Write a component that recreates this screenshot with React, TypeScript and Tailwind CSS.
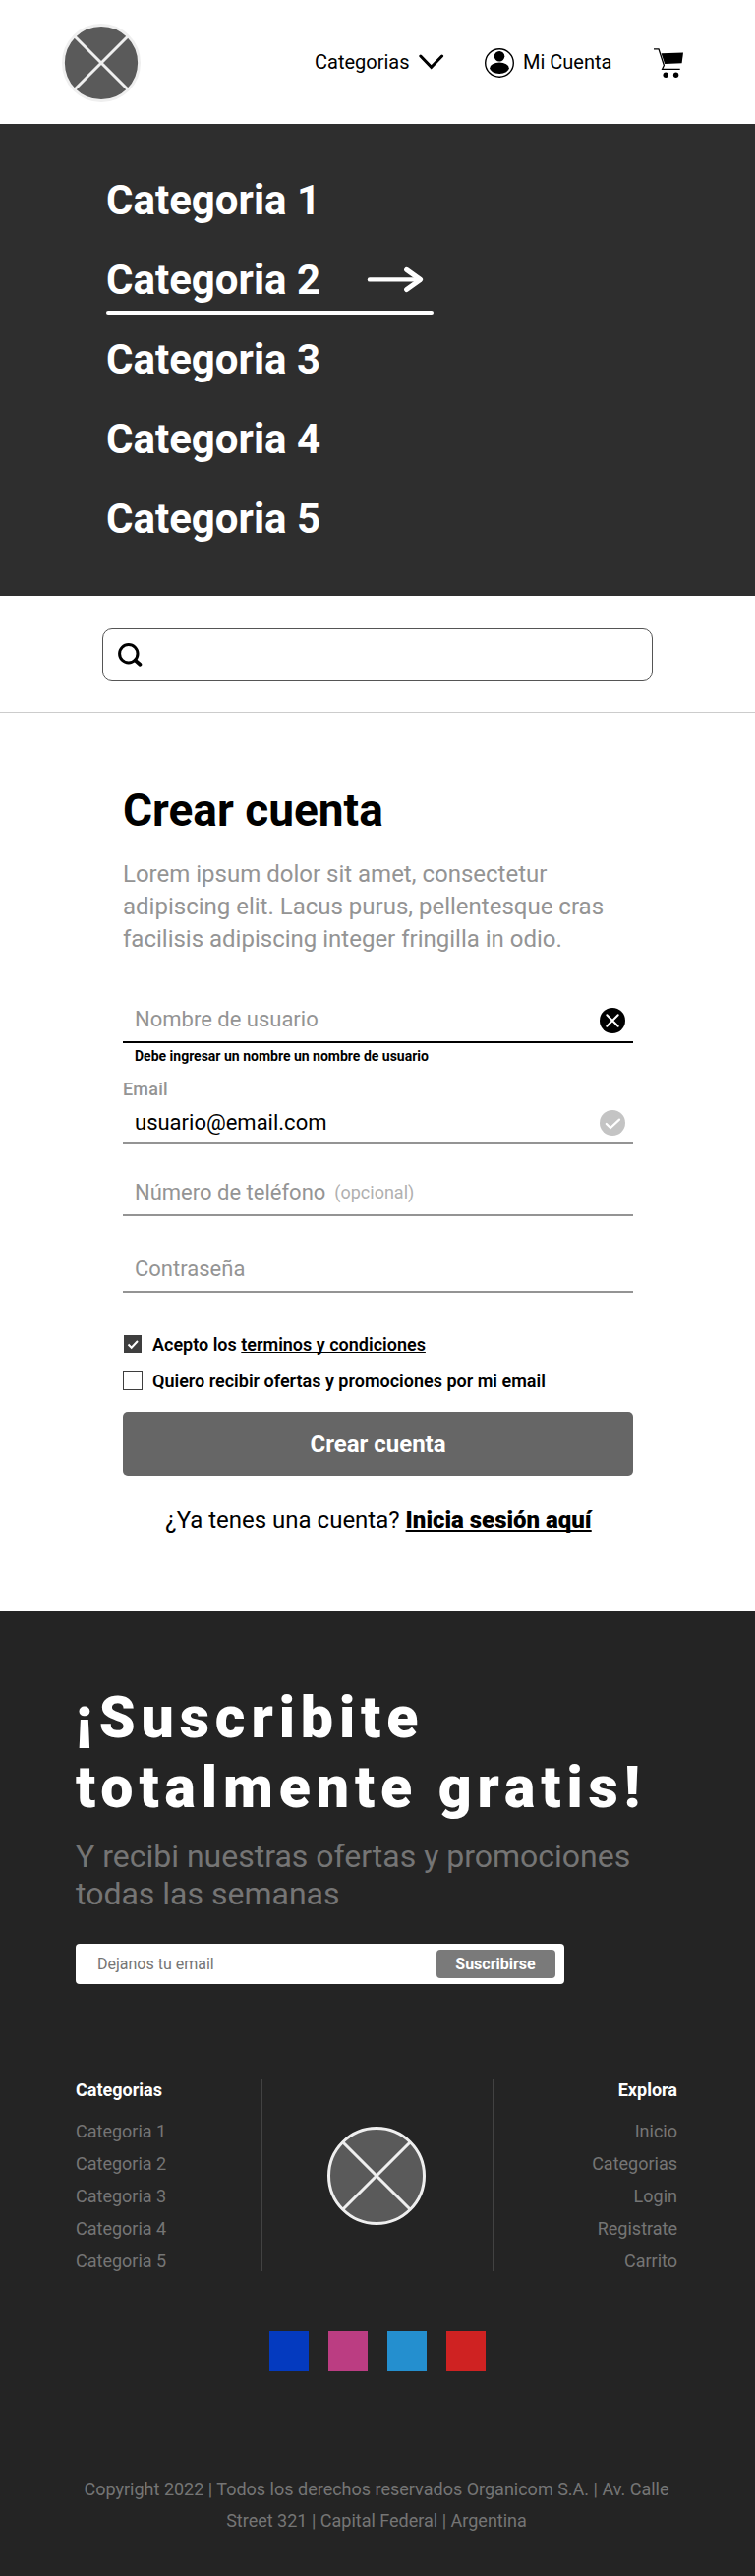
import React from "react";

function Logo({ size, ring }: { size: number; ring: number }) {
  const r = 50 - ring / 2;
  const d = r * 0.7071;
  return (
    <svg width={size} height={size} viewBox="0 0 100 100" className="block shrink-0">
      <circle cx="50" cy="50" r={r} fill="#5a5a5a" stroke="#efefef" strokeWidth={ring} />
      <path
        d={`M${50 - d} ${50 - d}L${50 + d} ${50 + d}M${50 + d} ${50 - d}L${50 - d} ${50 + d}`}
        stroke="#efefef"
        strokeWidth={ring}
      />
    </svg>
  );
}

function Header() {
  return (
    <header className="flex h-[126px] items-center bg-white pl-[63px] pr-[73px]">
      <div className="pt-[2px]">
        <Logo size={80} ring={3.6} />
      </div>
      <nav className="ml-auto flex items-center text-[20px] leading-6 text-black">
        <a className="flex items-center">
          <span className="w-[96px] whitespace-nowrap">Categorias</span>
          <svg width="26" height="16" viewBox="0 0 26 16" className="ml-[10px]" fill="none">
            <path d="M1.8 2L12.7 13.3L23.6 2" stroke="#000" strokeWidth="3" strokeLinecap="round" />
          </svg>
        </a>
        <a className="ml-[41px] flex items-center">
          <svg width="30" height="30" viewBox="0 0 30 30" className="mt-[2px]">
            <circle cx="15" cy="15" r="14.3" fill="none" stroke="#000" strokeWidth="1.4" />
            <circle cx="15" cy="8.2" r="5.3" />
            <ellipse cx="15" cy="20.3" rx="9.8" ry="5.7" />
          </svg>
          <span className="ml-[9px] w-[90px] whitespace-nowrap">Mi Cuenta</span>
        </a>
        <a className="ml-[43px] pt-[2px]">
          <svg width="30" height="30" viewBox="0 0 30 30" fill="none" className="block">
            <path d="M0 0.8H5L10.4 17.5L8.6 21.3H26.7" stroke="#000" strokeWidth="1.3" />
            <path d="M7.6 5.2L30 4.4L28.6 15.2L11.2 16Z" fill="#000" />
            <circle cx="12.2" cy="27.2" r="2.7" fill="#000" />
            <circle cx="22.6" cy="27.2" r="2.7" fill="#000" />
          </svg>
        </a>
      </nav>
    </header>
  );
}

function Menu() {
  return (
    <section className="h-[480px] bg-[#2e2e2e] pl-[108px] pt-[53px]">
      <ul className="flex w-[333px] flex-col gap-8 text-[42px] leading-[49px] font-bold text-white">
        {[1, 2, 3, 4, 5].map((n) => (
          <li key={n} className="relative flex h-[49px] items-center whitespace-nowrap">
            Categoria {n}
            {n === 2 && (
              <>
                <svg width="58" height="28" viewBox="0 0 58 28" fill="none" className="absolute left-[265px] top-[10px]">
                  <path d="M3 14.4H54" stroke="#fff" strokeWidth="4.4" strokeLinecap="round" />
                  <path d="M40.6 4.4L54.6 14.4L40.6 24.6" stroke="#fff" strokeWidth="5" strokeLinecap="round" strokeLinejoin="round" />
                </svg>
                <span className="absolute top-[56px] left-0 h-1 w-[333px] rounded-full bg-white" />
              </>
            )}
          </li>
        ))}
      </ul>
    </section>
  );
}

function Search() {
  return (
    <section className="flex h-[119px] justify-center border-b border-[#cccccc] bg-white pt-[33px]">
      <div className="flex h-[54px] w-[560px] items-center rounded-[10px] border border-[#555555] pl-[15px]">
        <svg width="25" height="25" viewBox="0 0 25 25" fill="none">
          <circle cx="10.8" cy="10.8" r="9.2" stroke="#000" strokeWidth="3" />
          <path d="M17.6 17.6L22.4 21.8" stroke="#000" strokeWidth="3.8" strokeLinecap="round" />
        </svg>
      </div>
    </section>
  );
}

function SignUp() {
  return (
    <main className="flex h-[914px] flex-col bg-white px-[125px] text-black">
      <h1 className="mt-[72px] text-[46px] leading-[54px] font-bold whitespace-nowrap">Crear cuenta</h1>
      <p className="mt-[22px] w-[519px] text-[24px] leading-[33px] text-[#949494]">
        <span className="block whitespace-nowrap">Lorem ipsum dolor sit amet, consectetur</span>
        <span className="block whitespace-nowrap">adipiscing elit. Lacus purus, pellentesque cras</span>
        <span className="block whitespace-nowrap">facilisis adipiscing integer fringilla in odio.</span>
      </p>

      <div className="mt-[41px] flex h-[48px] w-[519px] items-center border-b-2 border-black pr-[8px] pl-3">
        <span className="text-[22px] text-[#949494]">Nombre de usuario</span>
        <svg width="26" height="26" viewBox="0 0 26 26" className="mt-[4px] ml-auto" fill="none">
          <circle cx="13" cy="13" r="13" fill="#000" />
          <path d="M7.3 7.3L18.7 18.7M18.7 7.3L7.3 18.7" stroke="#fff" strokeWidth="2" strokeLinecap="round" />
        </svg>
      </div>
      <p className="mt-[5px] pl-3 text-[14px] leading-4 font-bold">Debe ingresar un nombre un nombre de usuario</p>

      <label className="mt-[15px] text-[18px] leading-[22px] font-medium tracking-[0.2px] text-[#949494]">Email</label>
      <div className="flex h-[45px] w-[519px] items-center border-b-2 border-[#949494] pt-[2px] pr-[8px] pl-3">
        <span className="text-[22px]">usuario@email.com</span>
        <svg width="26" height="26" viewBox="0 0 26 26" className="ml-auto" fill="none">
          <circle cx="13" cy="13" r="13" fill="#c4c4c4" />
          <path d="M6.8 14L11 18L20 9.6" stroke="#fff" strokeWidth="2.2" strokeLinecap="round" />
        </svg>
      </div>

      <div className="mt-[25px] flex h-[48px] w-[519px] items-center border-b-2 border-[#949494] pl-3">
        <span className="text-[22px] text-[#949494]">Número de teléfono</span>
        <span className="ml-[9px] text-[18px] text-[#b0b0b0]">(opcional)</span>
      </div>
      <div className="mt-[30px] flex h-[48px] w-[519px] items-center border-b-2 border-[#949494] pl-3">
        <span className="text-[22px] text-[#949494]">Contraseña</span>
      </div>

      <div className="mt-[42px] flex h-[20px] items-center text-[18px] leading-5 font-semibold">
        <svg width="20" height="20" viewBox="0 0 20 20" fill="none" className="mr-[10px]">
          <rect x="1" y="1" width="18" height="18" fill="#3e3e3e" />
          <path d="M5.5 10.5L8.7 13.7L15 7" stroke="#fff" strokeWidth="2" />
        </svg>
        <span className="pt-[2px]">
          Acepto los <a className="underline [text-decoration-skip-ink:none]">terminos y condiciones</a>
        </span>
      </div>
      <div className="mt-[17px] flex h-[20px] items-center text-[18px] leading-5 font-semibold">
        <span className="mr-[10px] size-5 border border-[#3e3e3e]" />
        <span className="pt-[2px]">Quiero recibir ofertas y promociones por mi email</span>
      </div>

      <button className="mt-[22px] flex h-[65px] w-[519px] shrink-0 items-center justify-center rounded-[5px] bg-[#666666] text-[24px] font-bold text-white">
        Crear cuenta
      </button>
      <p className="mt-[31px] pl-[2px] text-center text-[24px] leading-7 whitespace-nowrap">
        ¿Ya tenes una cuenta? <a className="font-black underline [text-decoration-skip-ink:none]">Inicia sesión aquí</a>
      </p>
    </main>
  );
}

function FooterList({ title, items, right }: { title: string; items: string[]; right?: boolean }) {
  return (
    <div className={right ? "w-[186px] text-right" : "w-[188px] text-left"}>
      <h3 className="text-[18px] leading-[21px] font-bold text-white">{title}</h3>
      <ul className="mt-[15px] text-[18px] leading-[33px] text-[#757575]">
        {items.map((item) => (
          <li key={item}>{item}</li>
        ))}
      </ul>
    </div>
  );
}

function Footer() {
  return (
    <footer className="h-[981px] bg-[#242424] px-[77px] pt-[72px]">
      <h2 className="text-[59px] leading-[71px] font-black tracking-[0.1em] text-white">
        <span className="block whitespace-nowrap">¡Suscribite</span>
        <span className="block whitespace-nowrap">totalmente gratis!</span>
      </h2>
      <p className="mt-[16px] text-[32px] leading-[38px] text-[#757575]">
        <span className="block whitespace-nowrap">Y recibi nuestras ofertas y promociones</span>
        <span className="block whitespace-nowrap">todas las semanas</span>
      </p>
      <div className="mt-[32px] flex h-[41px] w-[497px] items-center rounded-[4px] bg-white pr-[9px] pl-[22px]">
        <span className="text-[16px] text-[#757575]">Dejanos tu email</span>
        <button className="ml-auto h-[29px] w-[121px] rounded-[4px] bg-[#7a7a7a] pr-[1px] text-[16px] leading-[29px] font-bold text-white">
          Suscribirse
        </button>
      </div>

      <div className="mt-[97px] flex h-[195px] items-start">
        <FooterList title="Categorias" items={["Categoria 1", "Categoria 2", "Categoria 3", "Categoria 4", "Categoria 5"]} />
        <div className="flex h-[195px] w-[238px] items-center justify-center border-x-2 border-[#424242] pr-[2px]">
          <Logo size={100} ring={3} />
        </div>
        <FooterList right title="Explora" items={["Inicio", "Categorias", "Login", "Registrate", "Carrito"]} />
      </div>

      <div className="mt-[61px] flex justify-center gap-5">
        <span className="size-10 bg-[#043abf]" />
        <span className="size-10 bg-[#bb3d82]" />
        <span className="size-10 bg-[#248fcf]" />
        <span className="size-10 bg-[#cf2222]" />
      </div>
      <p className="mt-[105px] mr-[2px] text-center text-[18px] leading-8 text-[#757575]">
        <span className="block whitespace-nowrap">Copyright 2022 | Todos los derechos reservados Organicom S.A. | Av. Calle</span>
        <span className="block whitespace-nowrap">Street 321 | Capital Federal | Argentina</span>
      </p>
    </footer>
  );
}

export default function App() {
  return (
    <div className="w-[768px] overflow-hidden bg-white font-['Roboto',sans-serif]">
      <Header />
      <Menu />
      <Search />
      <SignUp />
      <Footer />
    </div>
  );
}
